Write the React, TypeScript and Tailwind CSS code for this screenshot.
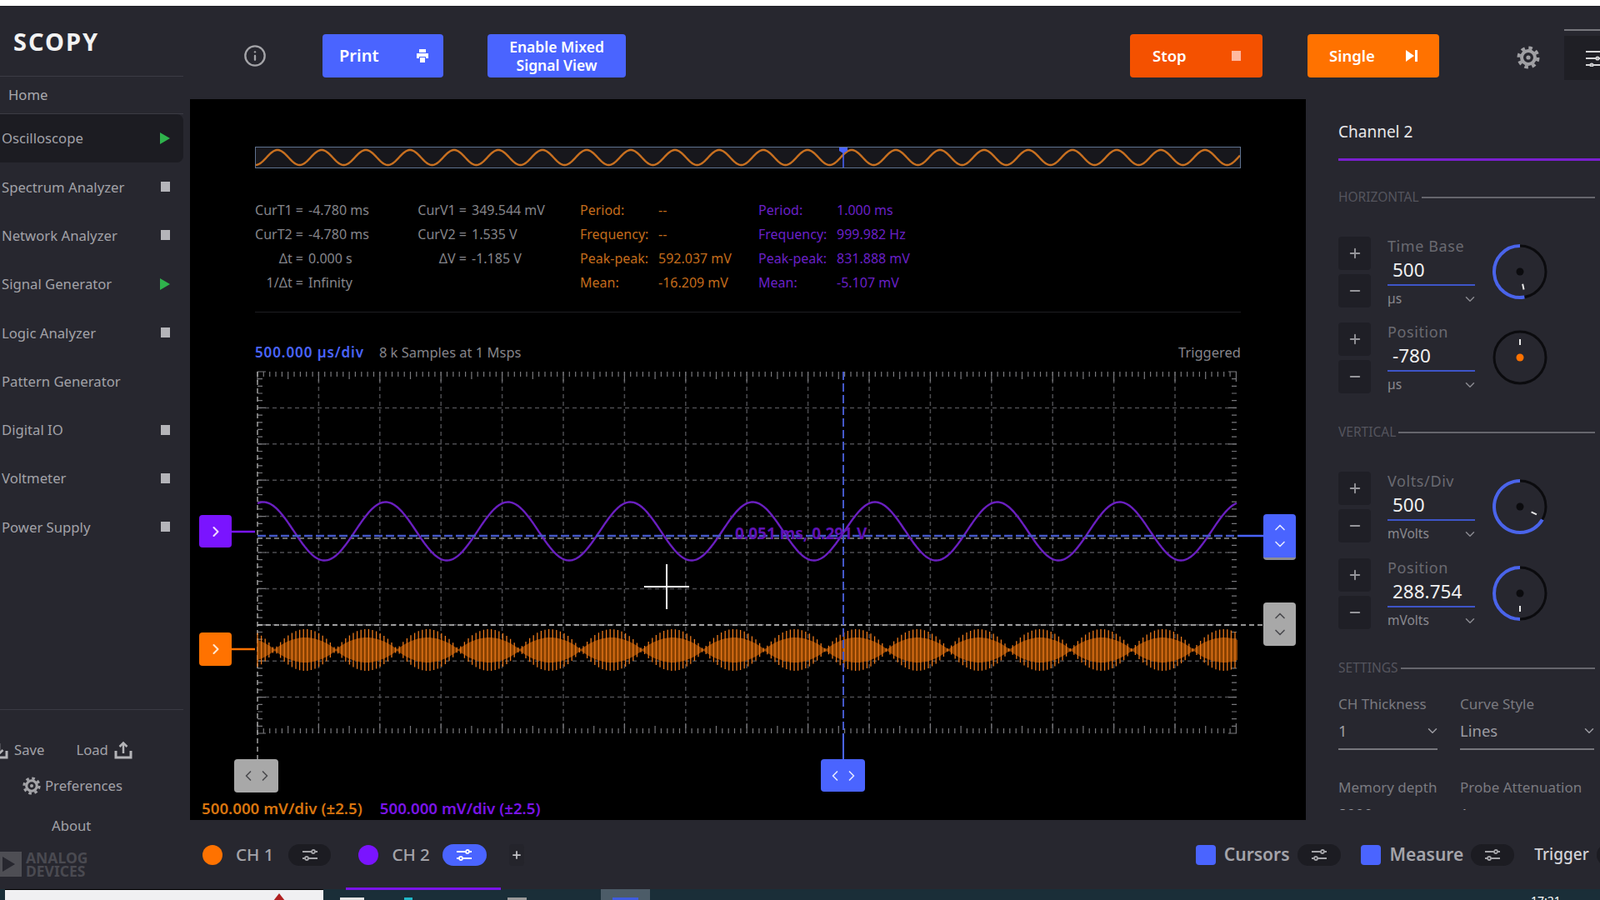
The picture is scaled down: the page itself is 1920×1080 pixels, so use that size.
import React from "react";
import { ChevronDown, ChevronLeft, ChevronRight, ChevronUp, Info, Minus, Plus } from "lucide-react";

const range = (n: number) => Array.from({ length: n }, (_, i) => i);

const overviewPath = range(1182)
  .map((i) => {
    const x = 307 + i;
    const y = 189 - 9 * Math.cos((2 * Math.PI * (x - 333)) / 53);
    return `${i ? "L" : "M"}${x} ${y.toFixed(2)}`;
  })
  .join("");

const purplePath = range(1176)
  .map((i) => {
    const x = 309 + i;
    const y = 637.5 - 35 * Math.cos((2 * Math.PI * (x - 316)) / 146.8);
    return `${i ? "L" : "M"}${x} ${y.toFixed(2)}`;
  })
  .join("");

const env = (x: number) => Math.max(2, 25 * Math.pow(Math.abs(Math.sin((Math.PI * (x - 403)) / 73.5)), 0.8));

const orangeFill = (() => {
  const pts: string[] = [];
  for (let x = 309; x <= 1485; x += 2) pts.push(`${x} ${(780 - env(x) * 0.6).toFixed(1)}`);
  for (let x = 1485; x >= 309; x -= 2) pts.push(`${x} ${(780 + env(x) * 0.6).toFixed(1)}`);
  return `M${pts.join("L")}Z`;
})();

const orangeSpikes = (() => {
  let d = "";
  for (let x = 309; x <= 1485; x += 4.6) {
    const e = env(x);
    d += `M${x.toFixed(1)} ${(780 - e).toFixed(1)}V${(780 + e).toFixed(1)}`;
  }
  return d;
})();

const gridV = range(15).map((i) => 309 + 73.4 * (i + 1));
const gridH = range(9).map((i) => 446 + 43.4 * (i + 1));

const ticksTop = (() => {
  let d = "";
  for (let i = 0; i <= 160; i++) {
    const x = 309 + i * 7.34;
    const l = i % 10 === 0 ? 12 : i % 5 === 0 ? 9 : 6;
    d += `M${x.toFixed(1)} 446v${l}M${x.toFixed(1)} 880v-${l}`;
  }
  return d;
})();

const ticksSide = (() => {
  let d = "";
  for (let i = 0; i <= 50; i++) {
    const y = 446 + i * 8.68;
    const l = i % 5 === 0 ? 10 : 6;
    d += `M309 ${y.toFixed(1)}h${l}M1484 ${y.toFixed(1)}h-${l}`;
  }
  return d;
})();

function PlaySq({ kind }: { kind: "play" | "stop" | "none" }) {
  if (kind === "none") return null;
  if (kind === "play")
    return (
      <svg width="12" height="14" viewBox="0 0 12 14" className="shrink-0">
        <path d="M0 0L12 7L0 14Z" fill="#2fb24c" />
      </svg>
    );
  return <div className="h-[12px] w-[11px] shrink-0 bg-[#b4b4b9]" />;
}

const tools: [string, "play" | "stop" | "none"][] = [
  ["Spectrum Analyzer", "stop"],
  ["Network Analyzer", "stop"],
  ["Signal Generator", "play"],
  ["Logic Analyzer", "stop"],
  ["Pattern Generator", "none"],
  ["Digital IO", "stop"],
  ["Voltmeter", "stop"],
  ["Power Supply", "stop"],
];

function Gear({ size, color }: { size: number; color: string }) {
  return (
    <svg width={size} height={size} viewBox="0 0 28 28" fill="none">
      <circle cx="14" cy="14" r="11.5" stroke={color} strokeWidth="4" strokeDasharray="4.5 4.53" />
      <circle cx="14" cy="14" r="8" stroke={color} strokeWidth="4" />
      <circle cx="14" cy="14" r="2.6" fill={color} />
    </svg>
  );
}

function Tray({ up }: { up: boolean }) {
  return (
    <svg width="22" height="22" viewBox="0 0 22 22" fill="none" stroke="#b4b4b8">
      <path d="M2 12V20H20V12" strokeWidth="3" />
      <path d="M11 15V3" strokeWidth="2.5" />
      <path d={up ? "M6.5 7L11 2.5L15.5 7" : "M6.5 11L11 15.5L15.5 11"} strokeWidth="2.5" />
    </svg>
  );
}

function Sidebar() {
  return (
    <div className="flex w-[228px] shrink-0 flex-col">
      <div className="flex h-[84px] w-[220px] shrink-0 items-center border-b border-[#3b3b44] pl-[16px]">
        <span className="font-['DejaVu_Sans',sans-serif] text-[29px] font-bold leading-none tracking-[2px] text-[#f2f2f2]">
          SCOPY
        </span>
      </div>
      <div className="flex h-[45px] w-[220px] shrink-0 items-center border-b border-[#3b3b44] pl-[10px] text-[16.7px] text-[#a9a9ae]">
        Home
      </div>
      <div className="flex h-[58px] w-[220px] shrink-0 items-center justify-between rounded-r-[8px] bg-[#1c1c22] pl-[2px] pr-[16px] text-[16.7px] text-[#a2a2a8]">
        <span>Oscilloscope</span>
        <PlaySq kind="play" />
      </div>
      {tools.map(([name, kind]) => (
        <div key={name} className="flex h-[58.3px] w-[220px] shrink-0 items-center justify-between pl-[2px] pr-[16px] text-[16.7px] text-[#a2a2a8]">
          <span>{name}</span>
          <PlaySq kind={kind} />
        </div>
      ))}
      <div className="mt-auto flex h-[216px] w-[220px] shrink-0 flex-col border-t border-[#3b3b44] text-[16.7px] text-[#a2a2a8]">
        <div className="mt-[36px] flex h-[24px] items-center">
          <div className="-ml-[12px]">
            <Tray up={false} />
          </div>
          <span className="ml-[7px]">Save</span>
          <span className="ml-[38px]">Load</span>
          <div className="ml-[7px]">
            <Tray up={true} />
          </div>
        </div>
        <div className="mt-[19px] flex h-[24px] items-center pl-[27px]">
          <Gear size={22} color="#a4a4a8" />
          <span className="ml-[5px]">Preferences</span>
        </div>
        <div className="mt-[24px] h-[24px] pl-[62px] leading-[24px]">About</div>
        <div className="mt-[18px] flex items-center">
          <svg width="26" height="30" viewBox="0 0 26 30">
            <path d="M0 0H26V30H0Z" fill="#4e4e54" />
            <path d="M3 6L18 15L3 24Z" fill="#27272f" />
          </svg>
          <div className="ml-[5px] font-['Liberation_Sans',sans-serif] text-[17.5px] font-bold leading-[16px] text-[#4a4a51]">
            <div>ANALOG</div>
            <div>DEVICES</div>
          </div>
        </div>
      </div>
    </div>
  );
}

function TopBar() {
  return (
    <div className="flex h-[111px] shrink-0 items-start overflow-hidden pt-[33px]">
      <div className="ml-[64px] mt-[12px] shrink-0 text-[#a4a4a8]">
        <Info size={28} strokeWidth={2} />
      </div>
      <div className="ml-[67px] flex h-[52px] w-[145px] shrink-0 items-center justify-between rounded-[4px] bg-[#4a64ff] pl-[20px] pr-[18px] text-[20px] font-semibold text-white">
        <span>Print</span>
        <svg width="14" height="16" viewBox="0 0 14 16" fill="#ffffff">
          <path d="M3 0H11V4H3ZM0 5H14V11H11V9H3V11H0ZM4 10H10V16H4Z" />
        </svg>
      </div>
      <div className="ml-[53px] flex h-[52px] w-[166px] shrink-0 items-center justify-center rounded-[4px] bg-[#4a64ff] text-center text-[17.5px] font-semibold leading-[22px] text-white">
        Enable Mixed
        <br />
        Signal View
      </div>
      <div className="ml-[605px] flex h-[52px] w-[159px] shrink-0 items-center justify-between rounded-[4px] bg-[#f45100] pl-[27px] pr-[26px] text-[18.5px] font-semibold text-white">
        <span>Stop</span>
        <div className="h-[12px] w-[11px] bg-[#ffb9a0]" />
      </div>
      <div className="ml-[54px] flex h-[52px] w-[158px] shrink-0 items-center justify-between rounded-[4px] bg-[#ff7200] pl-[26px] pr-[26px] text-[18.5px] font-semibold text-white">
        <span>Single</span>
        <svg width="14" height="14" viewBox="0 0 14 14" fill="#ffffff">
          <path d="M0 0L10 7L0 14ZM11 0H14V14H11Z" />
        </svg>
      </div>
      <div className="ml-[93px] mt-[14px] shrink-0">
        <Gear size={28} color="#a0a0a4" />
      </div>
      <div className="-mt-[6px] ml-[29px] flex w-[60px] shrink-0 flex-col">
        <div className="h-[2px] bg-[#77777d]" />
        <div className="mt-[6px] flex h-[53px] items-center bg-[#1f1f25] pl-[26px]">
          <svg width="20" height="20" viewBox="0 0 20 20" fill="none" stroke="#d4d4d6" strokeWidth="2">
            <path d="M0 2H20M0 10H20M0 18H20" />
            <circle cx="14" cy="10" r="1.6" fill="#1f1f25" />
            <circle cx="7" cy="18" r="1.6" fill="#1f1f25" />
          </svg>
        </div>
      </div>
    </div>
  );
}

function Chart() {
  return (
    <svg className="absolute inset-0 h-full w-full" viewBox="228 119 1339 865" fill="none">
      <g stroke="#4c4c50" strokeWidth="1.5" strokeDasharray="5 4">
        {gridV.map((x) => (
          <path key={x} d={`M${x} 446V880`} />
        ))}
        {gridH.map((y) => (
          <path key={y} d={`M309 ${y}H1484`} />
        ))}
      </g>
      <path d={ticksTop} stroke="#77777b" strokeWidth="1.2" />
      <path d={ticksSide} stroke="#77777b" strokeWidth="1.2" />
      <path d="M309 446V911" stroke="#a0a0a0" strokeWidth="1.5" strokeDasharray="6 4" />
      <path d="M309 750H1516" stroke="#c4c4c4" strokeWidth="1.5" strokeDasharray="6 4" />
      <path d="M309 646H1484" stroke="#8a8a8a" strokeWidth="1.5" strokeDasharray="6 4" />
      <path d={orangeFill} fill="#8a4200" />
      <path d={orangeSpikes} stroke="#ec7a1c" strokeWidth="1.3" />
      <path d={purplePath} stroke="#6a1fc0" strokeWidth="2.4" />
      <path d="M309 643H1485" stroke="#4458c8" strokeWidth="2.5" strokeDasharray="10 4" />
      <path d="M1485 643H1516" stroke="#4a64ff" strokeWidth="2.5" />
      <path d="M1012 446V880" stroke="#4458c8" strokeWidth="2" strokeDasharray="10 4" />
      <path d="M1012 880V911" stroke="#4a64ff" strokeWidth="2" />
      <path d="M278 638H306" stroke="#7a14ff" strokeWidth="2.5" />
      <path d="M278 779H306" stroke="#ff7200" strokeWidth="2.5" />
      <path d="M800 677V731M773 704H827" stroke="#ffffff" strokeWidth="2" />
    </svg>
  );
}

function Stat({ l, v, c }: { l: string; v: string; c: string }) {
  return (
    <div className={`flex h-[29px] items-center ${c}`}>
      <span className="w-[94px] shrink-0">{l}</span>
      <span>{v}</span>
    </div>
  );
}

function CursorRow({ l, v }: { l: string; v: string }) {
  return (
    <div className="flex h-[29px] items-center text-[#85858b]">
      <span className="w-[62px] shrink-0 whitespace-nowrap text-right">{l}</span>
      <span className="ml-[6px] whitespace-nowrap">{v}</span>
    </div>
  );
}

function Plot() {
  const orange = "text-[#c46c1c]";
  const purple = "text-[#6a20c8]";
  return (
    <div className="relative flex flex-1 flex-col overflow-hidden bg-black text-[16px]">
      <Chart />
      <div className="relative ml-[78px] mt-[57px] h-[26px] w-[1183px] border-[1.5px] border-[#5f7290] bg-[#17171c]">
        <svg className="absolute inset-0 h-full w-full" viewBox="307 177 1181 24" fill="none" preserveAspectRatio="none">
          <path d={overviewPath} stroke="#c87020" strokeWidth="2.4" />
          <path d="M1012 176V202" stroke="#4a64ff" strokeWidth="1.5" />
          <path d="M1007 176H1017V181L1012 184L1007 181Z" fill="#4a64ff" />
        </svg>
      </div>
      <div className="relative ml-[74px] mt-[35px] flex">
        <div className="w-[196px]">
          <CursorRow l="CurT1 =" v="-4.780 ms" />
          <CursorRow l="CurT2 =" v="-4.780 ms" />
          <CursorRow l="Δt =" v="0.000 s" />
          <CursorRow l="1/Δt =" v="Infinity" />
        </div>
        <div className="w-[198px]">
          <CursorRow l="CurV1 =" v="349.544 mV" />
          <CursorRow l="CurV2 =" v="1.535 V" />
          <CursorRow l="ΔV =" v="-1.185 V" />
        </div>
        <div className="w-[214px]">
          <Stat c={orange} l="Period:" v="--" />
          <Stat c={orange} l="Frequency:" v="--" />
          <Stat c={orange} l="Peak-peak:" v="592.037 mV" />
          <Stat c={orange} l="Mean:" v="-16.209 mV" />
        </div>
        <div>
          <Stat c={purple} l="Period:" v="1.000 ms" />
          <Stat c={purple} l="Frequency:" v="999.982 Hz" />
          <Stat c={purple} l="Peak-peak:" v="831.888 mV" />
          <Stat c={purple} l="Mean:" v="-5.107 mV" />
        </div>
      </div>
      <div className="relative ml-[78px] mt-[21px] w-[1183px] border-t border-[#1e1e22]" />
      <div className="relative ml-[78px] mt-[36px] flex h-[24px] w-[1183px] items-center">
        <span className="text-[17px] font-semibold tracking-[0.9px] text-[#4a64ff]">500.000 µs/div</span>
        <span className="ml-[18px] text-[16.5px] text-[#85858b]">8 k Samples at 1 Msps</span>
        <span className="ml-auto text-[16.5px] text-[#85858b]">Triggered</span>
      </div>
      <div className="relative ml-[14px] mt-auto flex h-[28px] gap-[21px] text-[18.7px] font-semibold">
        <span className="text-[#d9750f]">500.000 mV/div (±2.5)</span>
        <span className="text-[#7a14e8]">500.000 mV/div (±2.5)</span>
      </div>

      <div className="absolute left-[654px] top-[509px] text-[19px] font-bold leading-[24px] text-[#5f12b4]">0.051 ms, 0.291 V</div>

      <div className="absolute left-[11px] top-[499px] flex h-[39px] w-[39px] items-center justify-center rounded-[4px] bg-[#7a14ff] text-[#f0d8ff]">
        <ChevronRight size={20} strokeWidth={2.5} />
      </div>
      <div className="absolute left-[11px] top-[640px] flex h-[40px] w-[39px] items-center justify-center rounded-[4px] bg-[#ff7200] text-[#ffe6d0]">
        <ChevronRight size={20} strokeWidth={2.5} />
      </div>
      <div className="absolute left-[53px] top-[792px] flex h-[40px] w-[53px] items-center justify-center rounded-[4px] bg-[#a8a8a8] text-[#4a4a4e]">
        <ChevronLeft size={20} strokeWidth={2} />
        <ChevronRight size={20} strokeWidth={2} />
      </div>
      <div className="absolute left-[757px] top-[792px] flex h-[39px] w-[53px] items-center justify-center rounded-[4px] bg-[#4a64ff] text-[#e4e8ff]">
        <ChevronLeft size={20} strokeWidth={2} />
        <ChevronRight size={20} strokeWidth={2} />
      </div>
      <div className="absolute left-[1288px] top-[498px] flex h-[55px] w-[39px] flex-col items-center justify-center rounded-[4px] border-b-[3px] border-[#8d8d92] bg-[#4a64ff] text-[#e4e8ff]">
        <ChevronUp size={20} strokeWidth={2} />
        <ChevronDown size={20} strokeWidth={2} />
      </div>
      <div className="absolute left-[1288px] top-[604px] flex h-[52px] w-[39px] flex-col items-center justify-center rounded-[4px] bg-[#a8a8a8] text-[#4a4a4e]">
        <ChevronUp size={20} strokeWidth={2} />
        <ChevronDown size={20} strokeWidth={2} />
      </div>
    </div>
  );
}

function Knob({ arc, tick, dot }: { arc: number | null; tick: number; dot: string }) {
  const c = 34;
  const r = 31;
  const pt = (a: number, rad: number) => {
    const t = (a * Math.PI) / 180;
    return [c + rad * Math.sin(t), c - rad * Math.cos(t)];
  };
  const [ex, ey] = arc === null ? [0, 0] : pt(arc, r);
  const [t1x, t1y] = pt(tick, 15);
  const [t2x, t2y] = pt(tick, 22);
  return (
    <svg width="68" height="68" viewBox="0 0 68 68" fill="none" className="ml-[20px] shrink-0">
      <circle cx={c} cy={c} r={r} stroke="#0b0b0e" strokeWidth="3" />
      {arc !== null && (
        <path d={`M${c} ${c - r}A${r} ${r} 0 ${arc < 180 ? 1 : 0} 0 ${ex} ${ey}`} stroke="#4a64ea" strokeWidth="4" />
      )}
      <circle cx={c} cy={c} r="4.5" fill={dot} />
      <path d={`M${t1x} ${t1y}L${t2x} ${t2y}`} stroke="#e8e8e8" strokeWidth="2" />
    </svg>
  );
}

function Control({ label, value, unit, arc, tick, dot = "#0b0b0e" }: { label: string; value: string; unit: string; arc: number | null; tick: number; dot?: string }) {
  return (
    <div className="flex h-[85px] items-start">
      <div className="flex w-[39px] shrink-0 flex-col gap-[5px] text-[#96969b]">
        <div className="flex h-[40px] items-center justify-center rounded-[4px] bg-[#1f1f26]">
          <Plus size={18} strokeWidth={2.5} />
        </div>
        <div className="flex h-[40px] items-center justify-center rounded-[4px] bg-[#1f1f26]">
          <Minus size={18} strokeWidth={2.5} />
        </div>
      </div>
      <div className="ml-[20px] w-[105px] shrink-0">
        <div className="h-[22px] whitespace-nowrap text-[18px] leading-[22px] tracking-[0.6px] text-[#6a6a71]">{label}</div>
        <div className="h-[37px] border-b-2 border-[#3e55c8] pl-[6px] text-[22.5px] leading-[36px] text-[#f0f0f0]">{value}</div>
        <div className="-mr-[3px] flex h-[28px] items-center justify-between pt-[4px] text-[15.5px] text-[#8a8a90]">
          <span>{unit}</span>
          <ChevronDown size={18} strokeWidth={2} />
        </div>
      </div>
      <div className="mt-[8px]">
        <Knob arc={arc} tick={tick} dot={dot} />
      </div>
    </div>
  );
}

function Section({ title, mt }: { title: string; mt: string }) {
  return (
    <div className={`flex h-[20px] items-center gap-[3px] pr-[6px] text-[15.5px] text-[#55555e] ${mt}`}>
      <span className="leading-none">{title}</span>
      <div className="h-[2px] flex-1 bg-[#66666d]" />
    </div>
  );
}

function Select({ value, w }: { value: string; w: string }) {
  return (
    <div className={`flex h-[44px] items-center justify-between border-b-2 border-[#77777d] text-[18.5px] text-[#9c9ca2] ${w}`}>
      <span>{value}</span>
      <ChevronDown size={18} strokeWidth={2} className="-mr-[3px]" />
    </div>
  );
}

function Panel() {
  return (
    <div className="w-[353px] shrink-0">
      <div className="h-[853px] overflow-hidden pl-[39px]">
        <div className="mt-[27px] h-[24px] text-[19px] leading-[24px] text-[#e8e8ea]">Channel 2</div>
        <div className="mt-[20px] h-[3px] bg-[#7a1fd0]" />
        <Section title="HORIZONTAL" mt="mt-[34px]" />
        <div className="mt-[37px]">
          <Control label="Time Base" value="500" unit="µs" arc={170} tick={168} />
        </div>
        <div className="mt-[18px]">
          <Control label="Position" value="-780" unit="µs" arc={null} tick={0} dot="#ff7200" />
        </div>
        <Section title="VERTICAL" mt="mt-[37px]" />
        <div className="mt-[37px]">
          <Control label="Volts/Div" value="500" unit="mVolts" arc={120} tick={115} />
        </div>
        <div className="mt-[19px]">
          <Control label="Position" value="288.754" unit="mVolts" arc={180} tick={180} />
        </div>
        <Section title="SETTINGS" mt="mt-[37px]" />
        <div className="mt-[22px] flex gap-[27px]">
          <div>
            <div className="h-[22px] whitespace-nowrap text-[17px] leading-[22px] text-[#7a7a80]">CH Thickness</div>
            <Select value="1" w="w-[119px]" />
          </div>
          <div>
            <div className="h-[22px] whitespace-nowrap text-[17px] leading-[22px] text-[#7a7a80]">Curve Style</div>
            <Select value="Lines" w="w-[161px]" />
          </div>
        </div>
        <div className="mt-[34px] flex gap-[27px]">
          <div className="w-[119px]">
            <div className="h-[22px] whitespace-nowrap text-[17px] leading-[22px] text-[#7a7a80]">Memory depth</div>
            <div className="text-[18px] leading-[43px] text-[#9c9ca2]">8000</div>
          </div>
          <div className="w-[161px]">
            <div className="h-[22px] whitespace-nowrap text-[17px] leading-[22px] text-[#7a7a80]">Probe Attenuation</div>
            <div className="text-[18px] leading-[43px] text-[#9c9ca2]">1</div>
          </div>
        </div>
      </div>
    </div>
  );
}

function Tune({ active, w, ml }: { active?: boolean; w: string; ml: string }) {
  return (
    <div className={`flex h-[26px] shrink-0 items-center justify-center rounded-full ${w} ${ml} ${active ? "bg-[#4a64ff]" : "bg-[#1c1c22]"}`}>
      <svg width="20" height="14" viewBox="0 0 20 14" fill="none" stroke={active ? "#ffffff" : "#a4a4a8"} strokeWidth="1.8">
        <path d="M1 3H12M16 3H19M1 11H4M8 11H19" />
        <circle cx="14" cy="3" r="2" />
        <circle cx="6" cy="11" r="2" />
      </svg>
    </div>
  );
}

function BottomBar() {
  return (
    <div className="flex h-[83px] shrink-0 items-center overflow-hidden pl-[15px] text-[20.5px] text-[#a4a4aa]">
      <div className="h-[24px] w-[24px] shrink-0 rounded-full bg-[#ff7200]" />
      <span className="ml-[16px] shrink-0 font-medium">CH 1</span>
      <Tune w="w-[51px]" ml="ml-[18px]" />
      <div className="ml-[33px] h-[24px] w-[24px] shrink-0 rounded-full bg-[#7a14ff]" />
      <span className="ml-[16px] shrink-0 font-medium">CH 2</span>
      <Tune active w="w-[53px]" ml="ml-[15px]" />
      <div className="ml-[27px] flex h-[26px] w-[18px] shrink-0 items-center justify-center rounded-[4px] bg-[#24242b] text-[#c4c4c8]">
        <Plus size={14} strokeWidth={3} />
      </div>
      <div className="ml-[806px] h-[24px] w-[24px] shrink-0 rounded-[4px] bg-[#4a64ff]" />
      <span className="ml-[10px] shrink-0 text-[21px] font-semibold">Cursors</span>
      <Tune w="w-[52px]" ml="ml-[9px]" />
      <div className="ml-[24px] h-[24px] w-[24px] shrink-0 rounded-[4px] bg-[#4a64ff]" />
      <span className="ml-[11px] shrink-0 text-[21px] font-semibold">Measure</span>
      <Tune w="w-[52px]" ml="ml-[9px]" />
      <span className="ml-[24px] shrink-0 text-[19px] font-medium text-[#d2d2d6]">Trigger</span>
      <Tune w="w-[52px]" ml="ml-[9px]" />
    </div>
  );
}

function TaskBar() {
  return (
    <div className="relative flex h-[13px] shrink-0 overflow-hidden bg-[#1a2e38]">
      <div className="ml-[6px] flex h-[13px] w-[382px] shrink-0 justify-end border-t border-black bg-[#f0f0f2] pr-[46px] pt-[4px]">
        <svg width="14" height="9" viewBox="0 0 14 9">
          <path d="M7 0L14 9H0Z" fill="#b02020" />
        </svg>
      </div>
      <div className="ml-[20px] mt-[10px] h-[3px] w-[29px] shrink-0 bg-[#e4e4e4]" />
      <div className="ml-[48px] mt-[10px] h-[3px] w-[10px] shrink-0 bg-[#20b8c8]" />
      <div className="ml-[114px] mt-[10px] h-[3px] w-[23px] shrink-0 bg-[#9a9a9a]" />
      <div className="ml-[89px] flex h-[13px] w-[59px] shrink-0 justify-center bg-[#4c5c68] pt-[10px]">
        <div className="h-[3px] w-[31px] bg-[#3f5ce0]" />
      </div>
      <span className="ml-[1057px] -mt-[1px] shrink-0 text-[14px] leading-[30px] text-white">17:21</span>
    </div>
  );
}

export default function App() {
  return (
    <div className="flex h-[1080px] w-[1920px] flex-col overflow-hidden bg-[#27272f] font-['Open_Sans',sans-serif]">
      <div className="h-[8px] shrink-0 border-b border-[#222228] bg-white" />
      <div className="flex h-[1059px] shrink-0">
        <Sidebar />
        <div className="flex w-[1692px] flex-col">
          <TopBar />
          <div className="flex h-[865px] shrink-0">
            <Plot />
            <Panel />
          </div>
          <BottomBar />
        </div>
      </div>
      <div className="relative">
        <div className="absolute left-[415px] -top-[2px] z-10 h-[3px] w-[186px] bg-[#7a14e8]" />
        <TaskBar />
      </div>
    </div>
  );
}
